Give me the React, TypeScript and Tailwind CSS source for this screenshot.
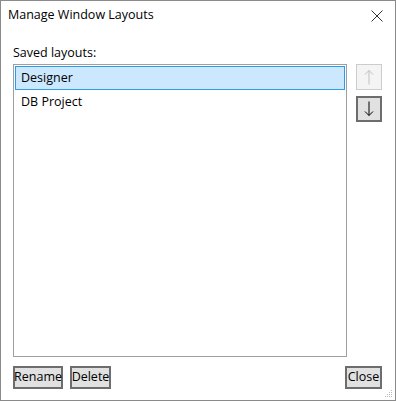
const layouts = ["Designer", "DB Project"]

function PushButton({ label }: { label: string }) {
  return (
    <button
      type="button"
      className="flex h-[23px] w-full items-center justify-center border-2 border-[#6d6d6d] bg-[#e1e1e1] text-[12.5px] leading-none text-black"
    >
      {label}
    </button>
  )
}

function Arrow({ down, color }: { down?: boolean; color: string }) {
  return (
    <svg
      width="10"
      height="16"
      viewBox="0 0 10 16"
      fill="none"
      stroke={color}
      strokeWidth="1"
      className={down ? "rotate-180" : ""}
    >
      <path d="M5 1.5V15.5M1 5.5L5 1.5L9 5.5" />
    </svg>
  )
}

export default function App() {
  return (
    <div
      className="flex h-[401px] w-[396px] flex-col border border-[#8a8a8a] bg-white text-black"
      style={{ fontFamily: '"Open Sans", "Noto Sans", sans-serif' }}
    >
      {/* Title bar */}
      <div className="flex h-[29px] items-center justify-between pl-[7px] pr-[12px]">
        <span className="text-[12.5px] leading-none">Manage Window Layouts</span>
        <svg width="12" height="12" viewBox="0 0 12 12" stroke="#333" strokeWidth="1">
          <path d="M0.5 0.5L11.5 11.5M11.5 0.5L0.5 11.5" />
        </svg>
      </div>

      <div className="flex flex-1 flex-col px-[12px]">
        <div className="mt-[15px] h-[16px] text-[12.5px] leading-[16px]">Saved layouts:</div>

        <div className="mt-[3px] flex gap-[9px]">
          {/* Layout list */}
          <div className="h-[293px] w-[334px] border border-[#a0a0a0] p-[1px]">
            {layouts.map((name, index) => (
              <div
                key={name}
                className={
                  index === 0
                    ? "flex h-[24px] items-center border border-[#2d9ce8] bg-[#cce8ff] pl-[5px] text-[12.5px]"
                    : "flex h-[24px] items-center border border-transparent pl-[5px] text-[12.5px]"
                }
              >
                {name}
              </div>
            ))}
          </div>

          {/* Move up / down */}
          <div className="flex flex-col gap-[6px]">
            <div className="flex h-[26px] w-[26px] items-center justify-center border border-[#cccccc] bg-[#f4f4f4]">
              <Arrow color="#bfbfbf" />
            </div>
            <div className="flex h-[26px] w-[26px] items-center justify-center border-2 border-[#6d6d6d] bg-[#e1e1e1]">
              <Arrow down color="#000" />
            </div>
          </div>
        </div>

        {/* Footer buttons */}
        <div className="mt-[9px] flex items-start justify-between pr-[1px]">
          <div className="flex gap-[7px]">
            <div className="w-[50px]">
              <PushButton label="Rename" />
            </div>
            <div className="w-[41px]">
              <PushButton label="Delete" />
            </div>
          </div>
          <div className="w-[37px]">
            <PushButton label="Close" />
          </div>
        </div>

        <div className="mt-auto flex justify-end pb-[2px]">
          <svg width="9" height="9" viewBox="0 0 9 9" className="-mr-[10px] fill-[#bcbcbc]">
            <rect x="7" y="1" width="1" height="1" />
            <rect x="5" y="3" width="1" height="1" />
            <rect x="7" y="3" width="1" height="1" />
            <rect x="3" y="5" width="1" height="1" />
            <rect x="5" y="5" width="1" height="1" />
            <rect x="7" y="5" width="1" height="1" />
            <rect x="1" y="7" width="1" height="1" />
            <rect x="3" y="7" width="1" height="1" />
            <rect x="5" y="7" width="1" height="1" />
            <rect x="7" y="7" width="1" height="1" />
          </svg>
        </div>
      </div>
    </div>
  )
}
